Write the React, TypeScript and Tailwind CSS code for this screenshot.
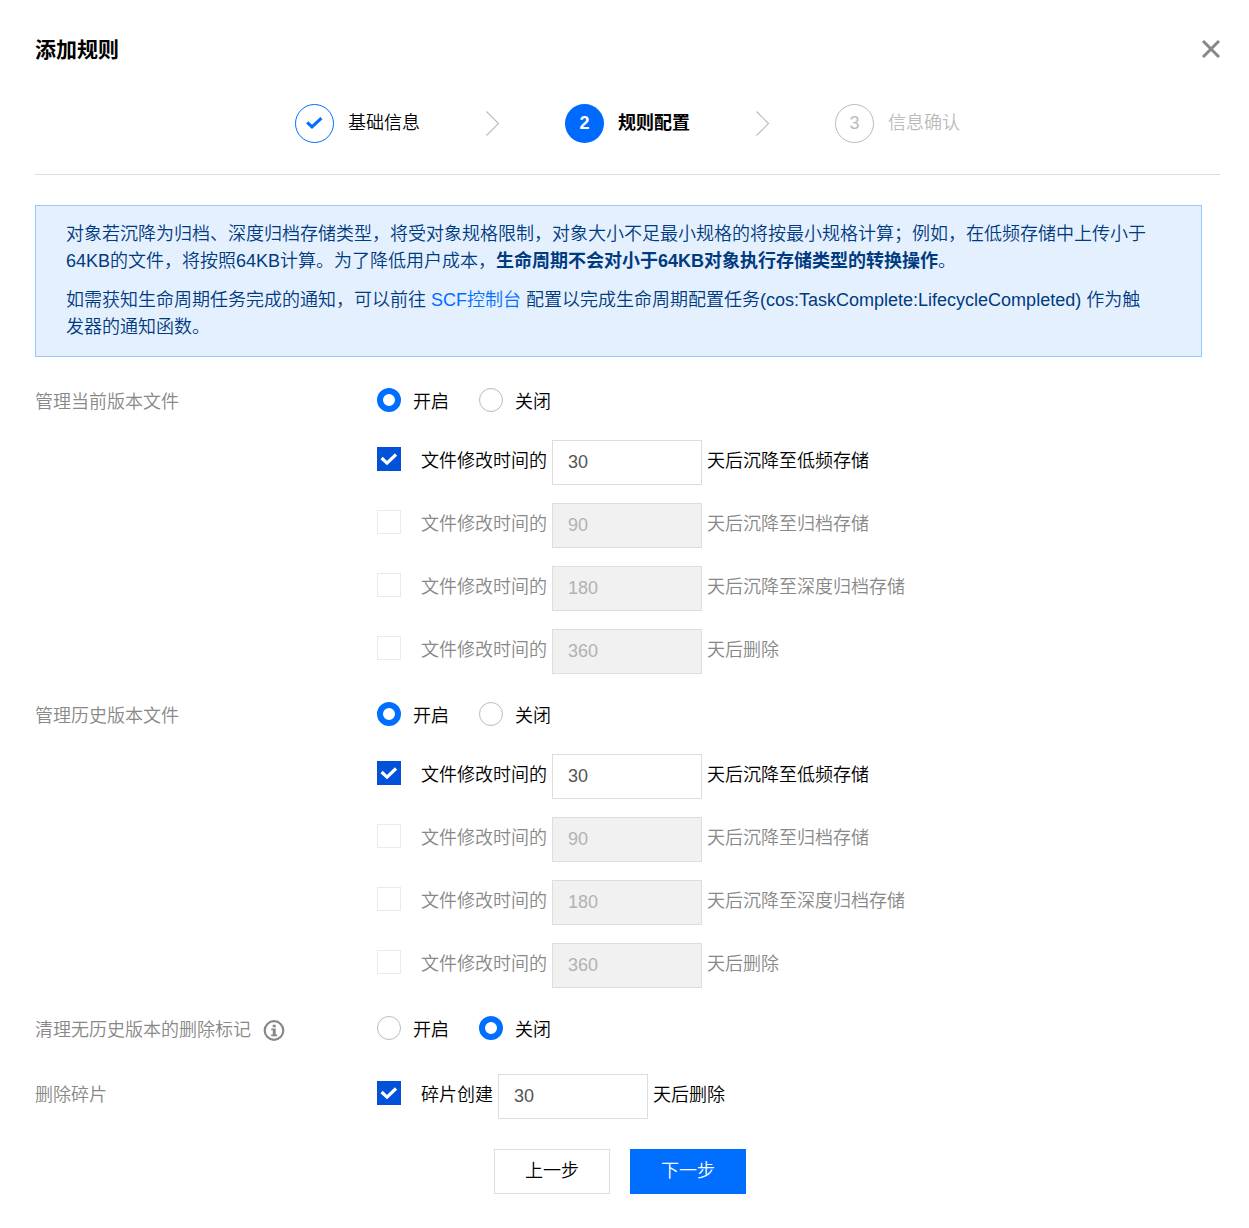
import { useId, useState } from "react";

const FONT =
  "font-['Liberation_Sans','Noto_Sans_CJK_SC',sans-serif]";

function Chevron() {
  return (
    <svg className="h-[26px] w-[15px] shrink-0" viewBox="0 0 15 26" fill="none" aria-hidden="true">
      <path d="M1.5 0.5L13.5 12.5L1.5 24.5" stroke="#bbbbbb" strokeWidth="1.1" />
    </svg>
  );
}

function Steps() {
  return (
    <ol className="flex items-center justify-center gap-[65px] border-b border-[#dddddd] pb-[31px]">
      <li className="flex items-center gap-3.5">
        <span className="flex size-[39px] items-center justify-center rounded-full border border-[#006eff]">
          <svg className="h-[14px] w-[18px]" viewBox="0 0 18 14" fill="none" aria-hidden="true">
            <path d="M1.2 5.4L6 9.9L15.4 1.1" stroke="#006eff" strokeWidth="3.1" />
          </svg>
        </span>
        <span>基础信息</span>
      </li>
      <li aria-hidden="true">
        <Chevron />
      </li>
      <li className="flex items-center gap-3.5 font-bold" aria-current="step">
        <span className="flex size-[39px] items-center justify-center rounded-full bg-[#006aff] text-white">
          2
        </span>
        <span>规则配置</span>
      </li>
      <li aria-hidden="true">
        <Chevron />
      </li>
      <li className="flex items-center gap-3.5 text-[#bbbbbb]">
        <span className="flex size-[39px] items-center justify-center rounded-full border border-[#bbbbbb]">
          3
        </span>
        <span>信息确认</span>
      </li>
    </ol>
  );
}

function Switch({ label, initial }: { label: string; initial: "on" | "off" }) {
  const name = useId();
  return (
    <div role="radiogroup" aria-label={label} className="flex flex-wrap gap-[30px]">
      {(["on", "off"] as const).map((value) => (
        <label key={value} className="flex items-start gap-3">
          <input
            type="radio"
            name={name}
            value={value}
            defaultChecked={value === initial}
            className="size-6 shrink-0 appearance-none rounded-full border border-[#bbbbbb] bg-white checked:border-[6px] checked:border-[#006eff]"
          />
          <span>{value === "on" ? "开启" : "关闭"}</span>
        </label>
      ))}
    </div>
  );
}

type DaysProps = { before: string; days: string; after: string; checked?: boolean };

function DaysRule({ before, days, after, checked = false }: DaysProps) {
  const [on, setOn] = useState(checked);
  return (
    <div className={on ? "flex items-start gap-[5px]" : "flex items-start gap-[5px] text-[#888888]"}>
      <label className="flex items-start gap-5 pt-[7px]">
        <span className="grid size-6 shrink-0">
          <input
            type="checkbox"
            checked={on}
            onChange={(e) => setOn(e.target.checked)}
            className="peer col-start-1 row-start-1 size-6 appearance-none border border-[#e7eaef] bg-white checked:border-[#0052d9] checked:bg-[#0052d9]"
          />
          <svg
            className="pointer-events-none invisible col-start-1 row-start-1 size-6 peer-checked:visible"
            viewBox="0 0 24 24"
            fill="none"
            aria-hidden="true"
          >
            <path d="M4.6 11L10 16.1L19 7.5" stroke="#ffffff" strokeWidth="3.2" />
          </svg>
        </span>
        <span>{before}</span>
      </label>
      <input
        type="text"
        inputMode="numeric"
        defaultValue={days}
        disabled={!on}
        aria-label={before + after}
        className="h-[45px] w-[150px] border border-[#dddddd] bg-white px-[15px] text-[#555555] disabled:bg-[#f1f1f1] disabled:text-[#b2b2b2]"
      />
      <span className="pt-[7px]">{after}</span>
    </div>
  );
}

const RULES: DaysProps[] = [
  { before: "文件修改时间的", days: "30", after: "天后沉降至低频存储", checked: true },
  { before: "文件修改时间的", days: "90", after: "天后沉降至归档存储" },
  { before: "文件修改时间的", days: "180", after: "天后沉降至深度归档存储" },
  { before: "文件修改时间的", days: "360", after: "天后删除" },
];

function VersionGroup({ title }: { title: string }) {
  return (
    <div className="flex pb-7">
      <div className="w-[342px] shrink-0 text-[#888888]">{title}</div>
      <div className="flex flex-col gap-[23px]">
        <Switch label={title} initial="on" />
        <div className="flex flex-col gap-[18px]">
          {RULES.map((rule) => (
            <DaysRule key={rule.days} {...rule} />
          ))}
        </div>
      </div>
    </div>
  );
}

export default function App() {
  return (
    <main
      className={`${FONT} min-h-screen bg-white pt-[34px] pr-[29px] pb-[34px] pl-[35px] text-[18px] leading-[27px] font-[350] text-black`}
      lang="zh-CN"
    >
      <header className="flex items-start justify-between pb-[38px]">
        <h1 className="text-[21px] leading-8 font-bold">添加规则</h1>
        <button type="button" aria-label="关闭" className="pt-1.5">
          <svg className="size-[18px]" viewBox="0 0 18 18" fill="none" aria-hidden="true">
            <path d="M1 1L17 17M17 1L1 17" stroke="#888888" strokeWidth="3" />
          </svg>
        </button>
      </header>

      <Steps />

      <section className="mt-[30px] mr-[18px] flex flex-col gap-3 border border-[#97c7ff] bg-[#e5f0ff] py-[15px] pr-[50px] pl-[30px] text-[#003b80]">
        <p>
          对象若沉降为归档、深度归档存储类型，将受对象规格限制，对象大小不足最小规格的将按最小规格计算；例如，在低频存储中上传小于64KB的文件，将按照64KB计算。为了降低用户成本，
          <strong className="font-bold">生命周期不会对小于64KB对象执行存储类型的转换操作</strong>。
        </p>
        <p>
          如需获知生命周期任务完成的通知，可以前往{" "}
          <a href="#scf" className="text-[#006eff]">
            SCF控制台
          </a>{" "}
          配置以完成生命周期配置任务(cos:TaskComplete:LifecycleCompleted) 作为触发器的通知函数。
        </p>
      </section>

      <form className="pt-[31px] pr-[15px] leading-[29px]" onSubmit={(e) => e.preventDefault()}>
        <VersionGroup title="管理当前版本文件" />
        <VersionGroup title="管理历史版本文件" />

        <div className="flex pb-[29px]">
          <div className="flex w-[342px] shrink-0 items-center gap-3 text-[#888888]">
            清理无历史版本的删除标记
            <svg className="size-[22px]" viewBox="0 0 22 22" fill="none" aria-hidden="true">
              <circle cx="11" cy="10.5" r="9.3" stroke="#888888" strokeWidth="2.2" />
              <path d="M9.7 4.7h3v2.5h-3zM8.2 8.5h4.5v6h1.4v1.8H8.2v-1.8h1.6v-4.2H8.2z" fill="#888888" />
            </svg>
          </div>
          <Switch label="清理无历史版本的删除标记" initial="off" />
        </div>

        <div className="flex">
          <div className="w-[342px] shrink-0 pt-[7px] text-[#888888]">删除碎片</div>
          <DaysRule before="碎片创建" days="30" after="天后删除" checked />
        </div>

        <div className="flex justify-center gap-5 pt-[30px]">
          <button type="button" className="h-[45px] w-[116px] border border-[#dddddd] bg-white">
            上一步
          </button>
          <button type="submit" className="h-[45px] w-[116px] border border-[#006eff] bg-[#006eff] text-white">
            下一步
          </button>
        </div>
      </form>
    </main>
  );
}
